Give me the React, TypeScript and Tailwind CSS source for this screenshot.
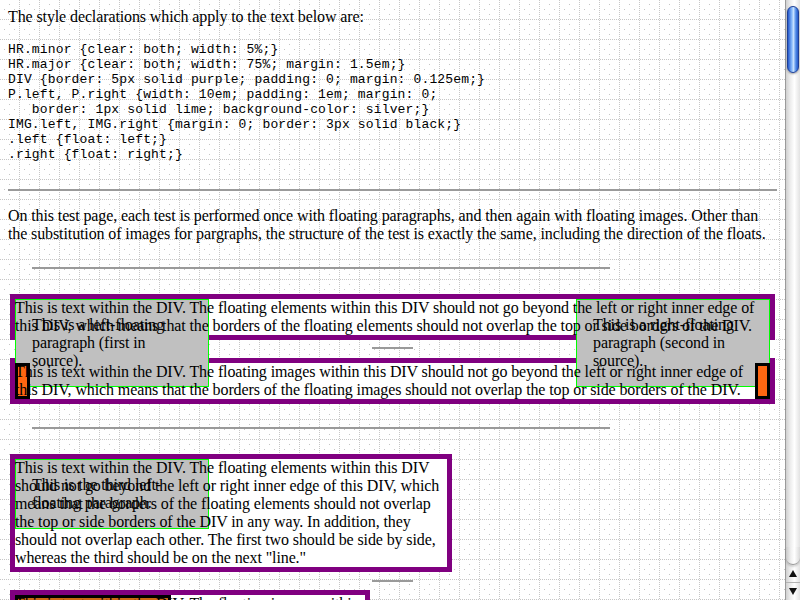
import React from "react";

const serif = "font-['Liberation_Serif','Times_New_Roman',serif]";

function GridBackground() {
  const line: React.ReactNode[] = [];
  for (let i = 0; i < 20; i += 2) {
    line.push(<rect key={"v" + i} x={19} y={i} width={1} height={1} />);
    line.push(<rect key={"h" + i} x={i} y={19} width={1} height={1} />);
  }
  return (
    <svg className="absolute inset-0" width="785" height="600">
      <defs>
        <pattern id="grid" width="20" height="20" patternUnits="userSpaceOnUse">
          <g fill="#c6c6c6">
            {line}
            <rect x={9} y={4} width={1} height={1} />
            <rect x={4} y={9} width={1} height={1} />
            <rect x={14} y={9} width={1} height={1} />
            <rect x={9} y={14} width={1} height={1} />
          </g>
        </pattern>
      </defs>
      <rect width="785" height="600" fill="url(#grid)" />
    </svg>
  );
}

function Scrollbar() {
  return (
    <div className="flex h-[600px] w-[15px] flex-col border-l border-[#9a9a9a] bg-[linear-gradient(to_right,#d0d0d0,#ececec_30%,#ffffff_60%,#e2e2e2)]">
      <div className="mx-auto mt-[6px] h-[67px] w-[12px] rounded-full border border-[#1d3f96] bg-[linear-gradient(to_right,#2457cc,#7fb2f7_35%,#c4e0ff_55%,#4a86e6_80%,#2a5cc8)] shadow-[0_1px_2px_rgba(0,0,0,0.35)]" />
      <div className="flex-1" />
      <div className="h-[18px] rounded-b-[8px] border-b border-[#9a9a9a] bg-[linear-gradient(to_right,#c8c8c8,#f0f0f0_35%,#ffffff_60%,#d8d8d8)] shadow-[0_2px_2px_rgba(0,0,0,0.15)]" />
      <div className="flex h-[18px] items-center justify-center border-b border-[#b4b4b4]">
        <svg width="8" height="7" viewBox="0 0 8 7">
          <polygon points="4,0 8,7 0,7" fill="#111" />
        </svg>
      </div>
      <div className="flex h-[17px] items-center justify-center">
        <svg width="8" height="7" viewBox="0 0 8 7">
          <polygon points="0,0 8,0 4,7" fill="#111" />
        </svg>
      </div>
    </div>
  );
}

function FloatPara({ children, side }: { children: React.ReactNode; side: "left" | "right" }) {
  return (
    <p
      className={
        "absolute top-0 z-10 w-[194px] border border-[#00ff00] bg-[#c0c0c0] p-[16px] leading-[18px] " +
        (side === "left" ? "left-0" : "right-0")
      }
    >
      {children}
    </p>
  );
}

export default function App() {
  return (
    <div className={"flex h-[600px] w-[800px] overflow-hidden bg-white text-[16px] tracking-[-0.11px] text-black " + serif}>
      <div className="relative h-[600px] w-[785px] overflow-hidden">
        <GridBackground />
        <div className="relative px-[8px] pt-[8px]">
          <p className="leading-[18px]">The style declarations which apply to the text below are:</p>
          <pre className="mt-[16px] font-['Liberation_Mono','Courier_New',monospace] text-[13px] leading-[15px] tracking-[0.15px]">
{`HR.minor {clear: both; width: 5%;}
HR.major {clear: both; width: 75%; margin: 1.5em;}
DIV {border: 5px solid purple; padding: 0; margin: 0.125em;}
P.left, P.right {width: 10em; padding: 1em; margin: 0;
   border: 1px solid lime; background-color: silver;}
IMG.left, IMG.right {margin: 0; border: 3px solid black;}
.left {float: left;}
.right {float: right;}`}
          </pre>
          <div className="mt-[27px] h-[2px] bg-[#9a9a9a]" />
          <p className="mt-[16px] whitespace-nowrap leading-[18px]">
            On this test page, each test is performed once with floating paragraphs, and then again with floating images. Other than
            <br />
            the substitution of images for pargraphs, the structure of the test is exactly the same, including the direction of the floats.
          </p>
          <div className="ml-[24px] mt-[24px] h-[2px] w-[578px] bg-[#9a9a9a]" />

          {/* floating paragraphs */}
          <div className="mx-[2px] mt-[25px] border-[5px] border-[#800080] bg-white">
            <div className="relative">
              <FloatPara side="left">This is a left-floating paragraph (first in source).</FloatPara>
              <FloatPara side="right">This is a right-floating paragraph (second in source).</FloatPara>
              <p className="relative z-20 whitespace-nowrap leading-[18px]">
                This is text within the DIV. The floating elements within this DIV should not go beyond the left or right inner edge of
                <br />
                this DIV, which means that the borders of the floating elements should not overlap the top or side borders of the DIV.
              </p>
            </div>
          </div>
          <div className="mx-auto mt-[7px] h-[2px] w-[41px] bg-[#9a9a9a]" />

          {/* floating images */}
          <div className="mx-[2px] mt-[9px] border-[5px] border-[#800080] bg-white">
            <div className="relative">
              <div className="absolute left-0 top-0 z-20 h-[36px] w-[15px] border-[3px] border-black bg-[#ff6611]" />
              <div className="absolute right-0 top-0 z-20 h-[36px] w-[15px] border-[3px] border-black bg-[#ff6611]" />
              <p className="relative z-30 whitespace-nowrap leading-[18px]">
                This is text within the DIV. The floating images within this DIV should not go beyond the left or right inner edge of
                <br />
                this DIV, which means that the borders of the floating images should not overlap the top or side borders of the DIV.
              </p>
            </div>
          </div>
          <div className="ml-[24px] mt-[23px] h-[2px] w-[578px] bg-[#9a9a9a]" />

          {/* three floats */}
          <div className="ml-[2px] mt-[25px] w-[442px] border-[5px] border-[#800080] bg-white">
            <div className="relative">
              <p className="absolute left-0 top-0 z-10 w-[194px] border border-[#00ff00] bg-[#c0c0c0] p-[16px] leading-[18px]">
                This is the third left-floating paragraph.
              </p>
              <p className="relative z-20 whitespace-nowrap leading-[18px]">
                This is text within the DIV. The floating elements within this DIV
                <br />
                should not go beyond the left or right inner edge of this DIV, which
                <br />
                means that the borders of the floating elements should not overlap
                <br />
                the top or side borders of the DIV in any way. In addition, they
                <br />
                should not overlap each other. The first two should be side by side,
                <br />
                whereas the third should be on the next "line."
              </p>
            </div>
          </div>
          <div className="mx-auto mt-[8px] h-[2px] w-[41px] bg-[#9a9a9a]" />

          {/* three images */}
          <div className="ml-[2px] mt-[8px] w-[360px] border-[5px] border-[#800080] bg-white">
            <div className="relative">
              <div className="absolute left-0 top-0 z-20 h-[40px] w-[156px] border-[3px] border-black bg-[#cc6814]" />
              <p className="relative z-30 whitespace-nowrap leading-[18px]">
                This is text within the DIV. The floating images within
                <br />
                this DIV should not go beyond the left or right inner edge
              </p>
            </div>
          </div>
        </div>
      </div>
      <Scrollbar />
    </div>
  );
}
